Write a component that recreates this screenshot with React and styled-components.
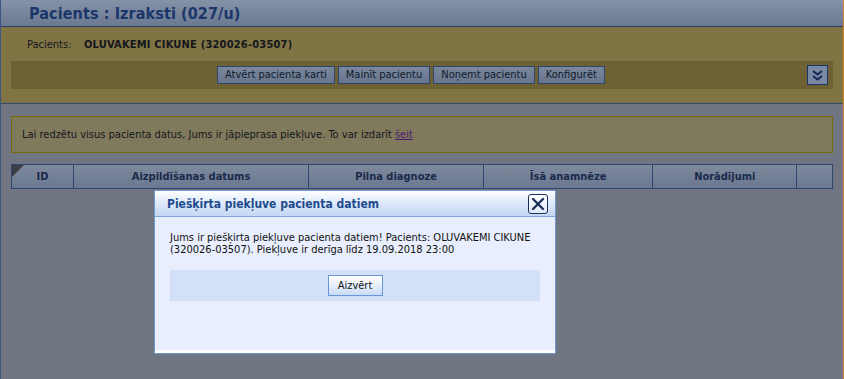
import React from 'react';
import styled, { createGlobalStyle } from 'styled-components';

const GlobalStyle = createGlobalStyle`
  html, body {
    margin: 0;
    padding: 0;
    background: #6f7681;
  }
  body {
    font-family: Tahoma, "DejaVu Sans Condensed", "Liberation Sans", sans-serif;
    font-size: 11px;
  }
`;

const columns = [
  { title: 'ID', width: 61 },
  { title: 'Aizpildīšanas datums', width: 236 },
  { title: 'Pilna diagnoze', width: 175 },
  { title: 'Īsā anamnēze', width: 170 },
  { title: 'Norādījumi', width: 144 },
  { title: '', width: 36 },
];

function App() {
  return (
    <>
      <GlobalStyle />
      <Page>
        <TitleBar>
          <Title>Pacients : Izraksti (027/u)</Title>
        </TitleBar>
        <PatientPanel>
          <PatientRow>
            <Label>Pacients:</Label>
            <PatientName>OLUVAKEMI CIKUNE (320026-03507)</PatientName>
          </PatientRow>
          <Toolbar>
            <ButtonGroup>
              <ToolButton>Atvērt pacienta karti</ToolButton>
              <ToolButton>Mainīt pacientu</ToolButton>
              <ToolButton>Noņemt pacientu</ToolButton>
              <ToolButton>Konfigurēt</ToolButton>
            </ButtonGroup>
            <ExpandButton aria-label="expand">
              <svg width="13" height="13" viewBox="0 0 13 13">
                <path d="M2 2 L6.5 5.5 L11 2" fill="none" stroke="#14275a" strokeWidth="2" />
                <path d="M2 7 L6.5 10.5 L11 7" fill="none" stroke="#14275a" strokeWidth="2" />
              </svg>
            </ExpandButton>
          </Toolbar>
        </PatientPanel>
        <Content>
          <InfoBox>
            Lai redzētu visus pacienta datus, Jums ir jāpieprasa piekļuve. To var izdarīt <InfoLink href="#">šeit</InfoLink>
          </InfoBox>
          <HeaderRow>
            {columns.map((c, i) => (
              <HeaderCell key={i} style={{ width: c.width }} $first={i === 0}>
                {c.title}
              </HeaderCell>
            ))}
          </HeaderRow>
        </Content>

        <Dialog>
          <DialogHeader>
            <DialogTitle>Piešķirta piekļuve pacienta datiem</DialogTitle>
            <CloseButton aria-label="close">
              <svg width="14" height="14" viewBox="0 0 14 14">
                <path d="M2 2 L12 12 M12 2 L2 12" stroke="#1c325c" strokeWidth="2.4" strokeLinecap="round" />
              </svg>
            </CloseButton>
          </DialogHeader>
          <DialogBody>
            <Message>
              Jums ir piešķirta piekļuve pacienta datiem! Pacients: OLUVAKEMI CIKUNE (320026-03507). Piekļuve ir derīga līdz 19.09.2018 23:00
            </Message>
            <ButtonBar>
              <DialogButton>Aizvērt</DialogButton>
            </ButtonBar>
          </DialogBody>
        </Dialog>
      </Page>
    </>
  );
}

export default App;

const Page = styled.div`
  position: relative;
  min-height: 379px;
  box-sizing: border-box;
  border-left: 1px solid #3e5684;
  border-right: 1px solid #d0882a;
  background: #6f7681;
`;

const TitleBar = styled.div`
  height: 27px;
  box-sizing: border-box;
  padding-left: 28px;
  display: flex;
  align-items: center;
  background: linear-gradient(#8592a8, #6b7990);
  border-bottom: 1px solid #2b3f66;
`;

const Title = styled.h1`
  margin: 0;
  font-size: 16px;
  font-weight: bold;
  color: #1b366a;
  letter-spacing: 0.1px;
`;

const PatientPanel = styled.div`
  background: #807444;
  padding: 0 10px 14px;
  border-bottom: 1px solid #34496f;
`;

const PatientRow = styled.div`
  height: 34px;
  display: flex;
  align-items: center;
  padding-left: 16px;
  color: #14161c;
`;

const Label = styled.span`
  width: 57px;
`;

const PatientName = styled.span`
  font-weight: bold;
  letter-spacing: 0.2px;
`;

const Toolbar = styled.div`
  height: 28px;
  background: #6e6234;
  display: flex;
  align-items: center;
  padding: 0 5px 0 206px;
`;

const ButtonGroup = styled.div`
  display: flex;
  gap: 3px;
`;

const ToolButton = styled.button`
  height: 18px;
  padding: 0 7px;
  font-family: inherit;
  font-size: 11px;
  color: #111a2a;
  background: linear-gradient(#7a879d, #67758d);
  border: 1px solid #2c4674;
  border-radius: 0;
  line-height: 14px;
`;

const ExpandButton = styled.button`
  margin-left: auto;
  width: 21px;
  height: 20px;
  padding: 0;
  display: flex;
  align-items: center;
  justify-content: center;
  background: #7989a3;
  border: 1px solid #1c3468;
`;

const Content = styled.div`
  padding: 12px 10px 0;
`;

const InfoBox = styled.div`
  height: 37px;
  box-sizing: border-box;
  display: flex;
  align-items: center;
  padding-left: 10px;
  background: #7f7a5c;
  border: 1px solid #7a680c;
  color: #14161c;
  margin-bottom: 11px;
`;

const InfoLink = styled.a`
  color: #4c1a6e;
  margin-left: 3px;
`;

const HeaderRow = styled.div`
  display: flex;
  height: 25px;
  box-sizing: border-box;
  border: 1px solid #2f4670;
  background: linear-gradient(#7e899c, #6b7890);
`;

const HeaderCell = styled.div`
  position: relative;
  box-sizing: border-box;
  display: flex;
  align-items: center;
  justify-content: center;
  font-weight: bold;
  color: #1a2a4a;
  border-left: ${({ $first }) => ($first ? 'none' : '1px solid #2f4670')};
  &::before {
    content: '';
    display: ${({ $first }) => ($first ? 'block' : 'none')};
    position: absolute;
    top: 0;
    left: 0;
    border-top: 12px solid #3c3e44;
    border-right: 12px solid transparent;
  }
`;

const Dialog = styled.div`
  position: absolute;
  left: 153px;
  top: 190px;
  width: 402px;
  height: 164px;
  box-sizing: border-box;
  border: 1px solid #6f98d8;
  background: #ffffff;
  padding-bottom: 3px;
  display: flex;
  flex-direction: column;
`;

const DialogHeader = styled.div`
  height: 26px;
  box-sizing: border-box;
  display: flex;
  align-items: center;
  padding: 0 7px 0 12px;
  background: linear-gradient(#ffffff, #e3ecfb 40%, #c3d6f4);
  border-bottom: 1px solid #7ea4dc;
`;

const DialogTitle = styled.div`
  font-size: 12px;
  font-weight: bold;
  color: #1d4b8e;
`;

const CloseButton = styled.button`
  margin-left: auto;
  width: 20px;
  height: 20px;
  padding: 0;
  display: flex;
  align-items: center;
  justify-content: center;
  background: linear-gradient(#ffffff, #dfe9fa);
  border: 1px solid #1c325c;
  border-radius: 3px;
`;

const DialogBody = styled.div`
  flex: 1;
  background: #e8eefd;
  padding: 15px 15px 0;
`;

const Message = styled.div`
  color: #111;
  font-size: 11px;
  line-height: 12px;
  margin-bottom: 14px;
`;

const ButtonBar = styled.div`
  height: 31px;
  background: #d3e1f8;
  display: flex;
  align-items: center;
  justify-content: center;
`;

const DialogButton = styled.button`
  width: 55px;
  height: 21px;
  padding: 0;
  font-family: inherit;
  font-size: 11px;
  color: #111;
  background: linear-gradient(#ffffff, #e6effc 50%, #c8dbf6);
  border: 1px solid #6a96d6;
  border-radius: 0;
`;
